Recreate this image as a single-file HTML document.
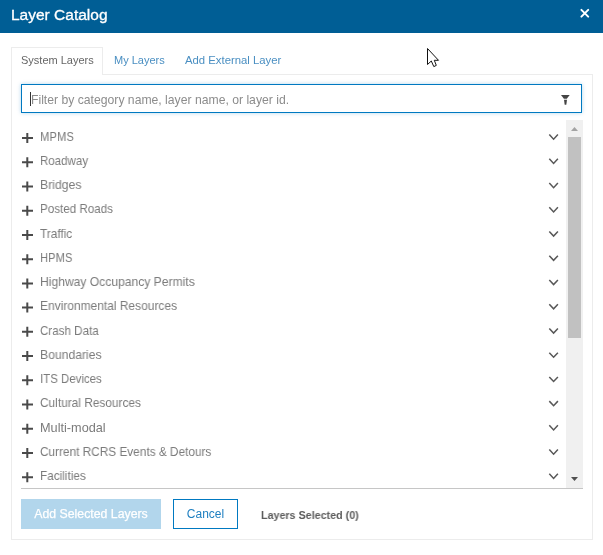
<!DOCTYPE html>
<html><head><meta charset="utf-8">
<style>
*{box-sizing:border-box;margin:0;padding:0}
html,body{width:603px;height:555px;overflow:hidden;background:#fff;font-family:"Liberation Sans",sans-serif;position:relative}
.a{position:absolute;white-space:nowrap;will-change:transform}
#hdr{left:0;top:0;width:603px;height:33px;background:#005e95}
#title{left:11px;top:4.5px;color:#fff;font-size:15.5px;line-height:20px;-webkit-text-stroke:0.3px #fff}
#panel{left:11px;top:74px;width:582px;height:466px;border:1px solid #ececec;border-top:none}
#tabline{left:102px;top:74px;width:491px;height:1px;background:#ececec}
#tab1{left:11px;top:47px;width:92px;height:28px;border:1px solid #ececec;border-bottom:none;background:#fff}
.tabt{font-size:11px;line-height:14px;top:53px}
#input{left:21px;top:84px;width:561px;height:29px;border:1px solid #0079c1;box-shadow:0 0 4px rgba(0,121,193,.30)}
#ph{left:31px;top:92.5px;font-size:12.2px;line-height:14px;color:#8c8c8c}
#caret{left:30px;top:92px;width:1px;height:14px;background:#333}
.rt{transform-origin:0 0;left:40px;font-size:12.6px;line-height:14px;color:#7b7b7b}
#sb{left:566px;top:120px;width:17px;height:368px;background:#f0f0f0}
#thumb{left:568px;top:137px;width:13px;height:201px;background:#c1c1c1}
#botline{left:21px;top:488px;width:562px;height:1px;background:#c6c6c6}
#btn1{left:21px;top:499px;width:140px;height:30px;background:#b2d6ec;color:#fff;font-size:12.3px;line-height:30px;text-align:center;-webkit-text-stroke:0.25px #fff}
#btn2{left:173px;top:499px;width:65px;height:30px;border:1px solid #0079c1;color:#1e7fc0;font-size:12px;line-height:28px;text-align:center}
#sel{left:260.5px;top:507.5px;font-size:11px;line-height:14px;color:#5c5c5c;font-weight:bold;transform:scaleX(0.975);transform-origin:0 0}
#ov{left:0;top:0;width:603px;height:555px}
</style></head><body>
<div id="hdr" class="a"></div>
<div id="title" class="a">Layer Catalog</div>
<div id="panel" class="a"></div>
<div id="tabline" class="a"></div>
<div id="tab1" class="a"></div>
<div class="a tabt" style="left:21px;color:#666">System Layers</div>
<div class="a tabt" style="left:114px;color:#4a8fc2">My Layers</div>
<div class="a tabt" style="left:185px;color:#4a8fc2;transform:scaleX(1.03);transform-origin:0 0">Add External Layer</div>
<div id="input" class="a"></div>
<div id="ph" class="a">Filter by category name, layer name, or layer id.</div>
<div id="caret" class="a"></div>
<div class="a rt" style="top:129.80px;transform:scaleX(0.8947)">MPMS</div>
<div class="a rt" style="top:154.03px;transform:scaleX(0.9151)">Roadway</div>
<div class="a rt" style="top:178.26px;transform:scaleX(0.9674)">Bridges</div>
<div class="a rt" style="top:202.49px;transform:scaleX(0.9228)">Posted Roads</div>
<div class="a rt" style="top:226.72px;transform:scaleX(0.9382)">Traffic</div>
<div class="a rt" style="top:250.95px;transform:scaleX(0.8917)">HPMS</div>
<div class="a rt" style="top:275.18px;transform:scaleX(0.9609)">Highway Occupancy Permits</div>
<div class="a rt" style="top:299.41px;transform:scaleX(0.9500)">Environmental Resources</div>
<div class="a rt" style="top:323.64px;transform:scaleX(0.9219)">Crash Data</div>
<div class="a rt" style="top:347.87px;transform:scaleX(0.9656)">Boundaries</div>
<div class="a rt" style="top:372.10px;transform:scaleX(0.9103)">ITS Devices</div>
<div class="a rt" style="top:396.33px;transform:scaleX(0.9430)">Cultural Resources</div>
<div class="a rt" style="top:420.56px;transform:scaleX(1.0092)">Multi-modal</div>
<div class="a rt" style="top:444.79px;transform:scaleX(0.9379)">Current RCRS Events &amp; Detours</div>
<div class="a rt" style="top:469.02px;transform:scaleX(0.9327)">Facilities</div>

<div id="sb" class="a"></div>
<div id="thumb" class="a"></div>
<div id="botline" class="a"></div>
<div id="btn1" class="a">Add Selected Layers</div>
<div id="btn2" class="a">Cancel</div>
<div id="sel" class="a">Layers Selected (0)</div>
<svg id="ov" class="a" viewBox="0 0 603 555">
<path d="M581.4 9.9L588.2 16.6M588.2 9.9L581.4 16.6" stroke="#fff" stroke-width="2" stroke-linecap="round"/>
<path d="M561 95H569.7L566.8 98.8H563.9Z" fill="#444"/><path d="M564 99.8H567L566.3 104.8H564.7Z" fill="#444"/>
<path d="M571 131L574.5 127L578 131Z" fill="#a3a3a3"/>
<path d="M571 477L574.5 481L578 477Z" fill="#505050"/>
<path d="M22 138.00H33M27.3 133.00V143.00" stroke="#4a4a4a" stroke-width="2"/><path d="M549.3 134.60L553.6 139.20L557.9 134.60" fill="none" stroke="#585858" stroke-width="1.5"/>
<path d="M22 162.23H33M27.3 157.23V167.23" stroke="#4a4a4a" stroke-width="2"/><path d="M549.3 158.83L553.6 163.43L557.9 158.83" fill="none" stroke="#585858" stroke-width="1.5"/>
<path d="M22 186.46H33M27.3 181.46V191.46" stroke="#4a4a4a" stroke-width="2"/><path d="M549.3 183.06L553.6 187.66L557.9 183.06" fill="none" stroke="#585858" stroke-width="1.5"/>
<path d="M22 210.69H33M27.3 205.69V215.69" stroke="#4a4a4a" stroke-width="2"/><path d="M549.3 207.29L553.6 211.89L557.9 207.29" fill="none" stroke="#585858" stroke-width="1.5"/>
<path d="M22 234.92H33M27.3 229.92V239.92" stroke="#4a4a4a" stroke-width="2"/><path d="M549.3 231.52L553.6 236.12L557.9 231.52" fill="none" stroke="#585858" stroke-width="1.5"/>
<path d="M22 259.15H33M27.3 254.15V264.15" stroke="#4a4a4a" stroke-width="2"/><path d="M549.3 255.75L553.6 260.35L557.9 255.75" fill="none" stroke="#585858" stroke-width="1.5"/>
<path d="M22 283.38H33M27.3 278.38V288.38" stroke="#4a4a4a" stroke-width="2"/><path d="M549.3 279.98L553.6 284.58L557.9 279.98" fill="none" stroke="#585858" stroke-width="1.5"/>
<path d="M22 307.61H33M27.3 302.61V312.61" stroke="#4a4a4a" stroke-width="2"/><path d="M549.3 304.21L553.6 308.81L557.9 304.21" fill="none" stroke="#585858" stroke-width="1.5"/>
<path d="M22 331.84H33M27.3 326.84V336.84" stroke="#4a4a4a" stroke-width="2"/><path d="M549.3 328.44L553.6 333.04L557.9 328.44" fill="none" stroke="#585858" stroke-width="1.5"/>
<path d="M22 356.07H33M27.3 351.07V361.07" stroke="#4a4a4a" stroke-width="2"/><path d="M549.3 352.67L553.6 357.27L557.9 352.67" fill="none" stroke="#585858" stroke-width="1.5"/>
<path d="M22 380.30H33M27.3 375.30V385.30" stroke="#4a4a4a" stroke-width="2"/><path d="M549.3 376.90L553.6 381.50L557.9 376.90" fill="none" stroke="#585858" stroke-width="1.5"/>
<path d="M22 404.53H33M27.3 399.53V409.53" stroke="#4a4a4a" stroke-width="2"/><path d="M549.3 401.13L553.6 405.73L557.9 401.13" fill="none" stroke="#585858" stroke-width="1.5"/>
<path d="M22 428.76H33M27.3 423.76V433.76" stroke="#4a4a4a" stroke-width="2"/><path d="M549.3 425.36L553.6 429.96L557.9 425.36" fill="none" stroke="#585858" stroke-width="1.5"/>
<path d="M22 452.99H33M27.3 447.99V457.99" stroke="#4a4a4a" stroke-width="2"/><path d="M549.3 449.59L553.6 454.19L557.9 449.59" fill="none" stroke="#585858" stroke-width="1.5"/>
<path d="M22 477.22H33M27.3 472.22V482.22" stroke="#4a4a4a" stroke-width="2"/><path d="M549.3 473.82L553.6 478.42L557.9 473.82" fill="none" stroke="#585858" stroke-width="1.5"/>

<path d="M427.5 48.5V64.5L431.3 61L433.8 66.6L436.3 65.4L434.3 60.3H438.5Z" fill="#fff" stroke="#111" stroke-width="1" stroke-linejoin="round"/>
</svg>
</body></html>
